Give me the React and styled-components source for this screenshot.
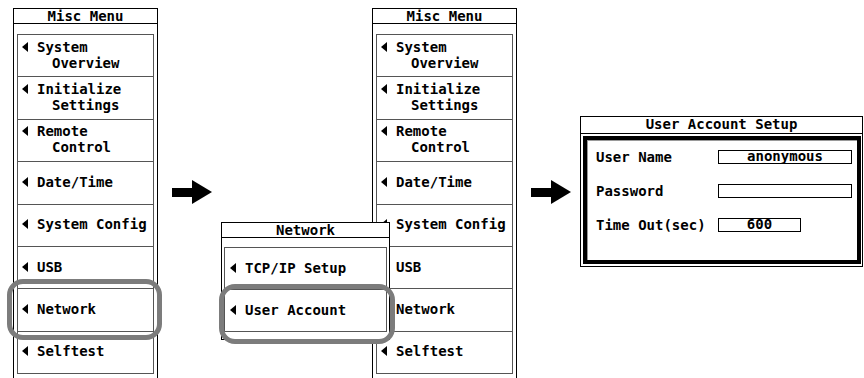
import React from 'react';
import styled, { createGlobalStyle } from 'styled-components';

const GlobalStyle = createGlobalStyle`
  html, body {
    margin: 0;
    padding: 0;
    background: #fff;
  }
  body {
    font-family: "DejaVu Sans Mono", "Liberation Mono", monospace;
    color: #000;
  }
`;

// 전체 캔버스
const Canvas = styled.div`
  display: flex;
  align-items: flex-start;
  width: 864px;
  height: 378px;
  padding: 8px 0 0 13px;
  box-sizing: border-box;
  overflow: hidden;
  background: #fff;
  font-size: 14px;
  font-weight: bold;
`;

const Panel = styled.div`
  width: 145px;
  height: 370px;
  border: 1px solid #000;
  border-bottom: none;
  box-sizing: border-box;
  display: flex;
  flex-direction: column;
  flex-shrink: 0;
  background: #fff;
`;

const Header = styled.div`
  height: 14px;
  line-height: 14px;
  border-bottom: 1px solid #000;
  text-align: center;
  white-space: pre;
  flex-shrink: 0;
`;

const ItemList = styled.div`
  margin: ${p => p.$top}px ${p => p.$side}px 0;
  height: ${p => p.$height}px;
  border: 1px solid #555;
  box-sizing: border-box;
  display: flex;
  flex-direction: column;
`;

const Item = styled.div`
  position: relative;
  flex: 1;
  display: flex;
  align-items: center;
  padding-left: ${p => p.$pad}px;
  & + & {
    border-top: 1px solid #555;
  }
`;

const Label = styled.div`
  display: flex;
  flex-direction: column;
  margin-top: -2px;
`;

const Line = styled.div`
  display: flex;
  align-items: center;
  height: 16px;
  white-space: pre;
  padding-left: ${p => (p.$indent ? 30 : 0)}px;
`;

const Tri = styled.svg`
  width: 6px;
  height: 10px;
  margin-right: 9px;
  flex-shrink: 0;
`;

const Highlight = styled.div`
  position: absolute;
  top: ${p => p.$t}px;
  left: ${p => p.$l}px;
  right: ${p => p.$r}px;
  bottom: ${p => p.$b}px;
  border: 5px solid #7c7c7c;
  border-radius: 16px;
  pointer-events: none;
  z-index: 3;
`;

const ArrowBox = styled.svg`
  width: 40px;
  height: 24px;
  flex-shrink: 0;
  margin-left: 14px;
  margin-top: ${p => p.$top}px;
`;

const Popup = styled.div`
  position: relative;
  z-index: 2;
  width: 169px;
  height: 118px;
  margin: 214px -18px 0 9px;
  border: 1px solid #000;
  box-sizing: border-box;
  background: #fff;
  display: flex;
  flex-direction: column;
  flex-shrink: 0;
`;

const Dialog = styled.div`
  width: 283px;
  height: 151px;
  margin: 108px 0 0 9px;
  border: 1px solid #000;
  box-sizing: border-box;
  display: flex;
  flex-direction: column;
  flex-shrink: 0;
`;

const DialogHeader = styled(Header)`
  height: 16px;
  line-height: 15px;
`;

const Frame = styled.div`
  flex: 1;
  margin: 2px 1px 2px 2px;
  border: 4px solid #000;
  box-shadow: inset 1px 1px 0 #9a9a9a;
  display: grid;
  grid-template-columns: 122px auto;
  grid-auto-rows: 14px;
  row-gap: 20px;
  align-content: start;
  padding: 10px 0 0 9px;
`;

const FieldLabel = styled.div`
  line-height: 14px;
  white-space: pre;
`;

const Field = styled.div`
  width: ${p => p.$w}px;
  height: 14px;
  border: 1px solid #000;
  box-sizing: border-box;
  line-height: 11px;
  text-align: center;
  justify-self: start;
`;

const Arrow = ({ top }) => (
  <ArrowBox $top={top} viewBox="0 0 40 24">
    <rect x="0" y="8" width="22" height="9" fill="#000" />
    <polygon points="20,0 40,12 20,24" fill="#000" />
  </ArrowBox>
);

const TriIcon = () => (
  <Tri viewBox="0 0 6 10">
    <polygon points="6,0 0,5 6,10" fill="#000" />
  </Tri>
);

const miscItems = [
  ['System', 'Overview'],
  ['Initialize', 'Settings'],
  ['Remote', 'Control'],
  ['Date/Time'],
  ['System Config'],
  ['USB'],
  ['Network'],
  ['Selftest'],
];

function MiscMenu({ mark }) {
  return (
    <Panel>
      <Header>Misc Menu</Header>
      <ItemList $top={10} $side={3} $height={340}>
        {miscItems.map(lines => (
          <Item key={lines[0]} $pad={4}>
            <Label>
              <Line><TriIcon />{lines[0]}</Line>
              {lines[1] && <Line $indent>{lines[1]}</Line>}
            </Label>
            {mark && lines[0] === 'Network' && <Highlight $t={-10} $l={-11} $r={-9} $b={-9} />}
          </Item>
        ))}
      </ItemList>
    </Panel>
  );
}

export default function App() {
  return (
    <>
      <GlobalStyle />
      <Canvas>
        <MiscMenu mark />
        <Arrow top={172} />
        <Popup>
          <Header>Network</Header>
          <ItemList $top={9} $side={2} $height={85}>
            <Item $pad={5}>
              <Label><Line><TriIcon />TCP/IP Setup</Line></Label>
            </Item>
            <Item $pad={5}>
              <Label><Line><TriIcon />User Account</Line></Label>
              <Highlight $t={-6} $l={-6} $r={-9} $b={-13} />
            </Item>
          </ItemList>
        </Popup>
        <MiscMenu />
        <Arrow top={172} />
        <Dialog>
          <DialogHeader>User Account Setup</DialogHeader>
          <Frame>
            <FieldLabel>User Name</FieldLabel>
            <Field $w={134}>anonymous</Field>
            <FieldLabel>Password</FieldLabel>
            <Field $w={134} />
            <FieldLabel>Time Out(sec)</FieldLabel>
            <Field $w={83}>600</Field>
          </Frame>
        </Dialog>
      </Canvas>
    </>
  );
}
